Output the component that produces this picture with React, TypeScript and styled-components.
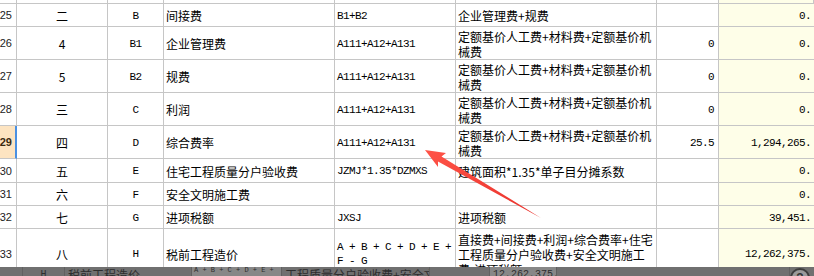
import React from 'react';
import styled, { createGlobalStyle, css } from 'styled-components';

const GlobalStyle = createGlobalStyle`
  html, body {
    margin: 0;
    padding: 0;
    background: #ffffff;
    overflow: hidden;
  }
`;

const CJK = `"Noto Sans CJK SC", "Noto Sans", sans-serif`;
const MONO = `"Liberation Mono", "Noto Sans CJK SC", monospace`;

type Line = {
  no: string;
  num: string;
  code: string;
  name: string;
  formula: string[];
  desc: string[];
  rate: string;
  amount: string;
  h: number;
  active?: boolean;
};

const lines: Line[] = [
  { no: '25', num: '二', code: 'B', name: '间接费', formula: ['B1+B2'], desc: ['企业管理费+规费'], rate: '', amount: '0.00', h: 23 },
  { no: '26', num: '4', code: 'B1', name: '企业管理费', formula: ['A111+A12+A131'], desc: ['定额基价人工费+材料费+定额基价机', '械费'], rate: '0', amount: '0.00', h: 33 },
  { no: '27', num: '5', code: 'B2', name: '规费', formula: ['A111+A12+A131'], desc: ['定额基价人工费+材料费+定额基价机', '械费'], rate: '0', amount: '0.00', h: 33 },
  { no: '28', num: '三', code: 'C', name: '利润', formula: ['A111+A12+A131'], desc: ['定额基价人工费+材料费+定额基价机', '械费'], rate: '0', amount: '0.00', h: 33 },
  { no: '29', num: '四', code: 'D', name: '综合费率', formula: ['A111+A12+A131'], desc: ['定额基价人工费+材料费+定额基价机', '械费'], rate: '25.5', amount: '1,294,265.00', h: 33, active: true },
  { no: '30', num: '五', code: 'E', name: '住宅工程质量分户验收费', formula: ['JZMJ*1.35*DZMXS'], desc: ['建筑面积*1.35*单子目分摊系数'], rate: '', amount: '0.00', h: 24 },
  { no: '31', num: '六', code: 'F', name: '安全文明施工费', formula: [''], desc: [''], rate: '', amount: '0.00', h: 23 },
  { no: '32', num: '七', code: 'G', name: '进项税额', formula: ['JXSJ'], desc: ['进项税额'], rate: '', amount: '39,451.00', h: 23 },
  { no: '33', num: '八', code: 'H', name: '税前工程造价', formula: ['A + B + C + D + E +', 'F - G'], desc: ['直接费+间接费+利润+综合费率+住宅', '工程质量分户验收费+安全文明施工', '费-进项税额'], rate: '', amount: '12,262,375.74', h: 50 },
];

export default function App() {
  return (
    <>
      <GlobalStyle />
      <Sheet>
        <Row $h={4}>
          <RowHead />
          <Cell /><Cell /><Cell /><Cell /><Cell /><Cell /><Cell $yellow />
        </Row>
        {lines.map((l) => (
          <Row key={l.no} $h={l.h}>
            <RowHead $active={l.active}>{l.no}</RowHead>
            <Cell $align="center" $font="cjk">{l.num}</Cell>
            <Cell $align="center" $font="mono">{l.code}</Cell>
            <Cell $font="cjk">{l.name}</Cell>
            <Cell $font="mono">
              <Stack $lh={14}>
                {l.formula.map((f, i) => <span key={i}>{f}</span>)}
              </Stack>
            </Cell>
            <Cell $font="cjk">
              <Stack $lh={15}>
                {l.desc.map((d, i) => <span key={i}>{d}</span>)}
              </Stack>
            </Cell>
            <Cell $align="right" $font="mono">{l.rate}</Cell>
            <AmountCell>
              <AmountClip>
                <AmountText>{l.amount}</AmountText>
              </AmountClip>
            </AmountCell>
          </Row>
        ))}

        <DragGhost>
          <Seg $w={23} />
          <Seg $w={42} $center>H</Seg>
          <Seg $w={127} $cjk>税前工程造价</Seg>
          <Seg $w={90} $light $tiny>A + B + C + D + E +</Seg>
          <Seg $w={148} $cjk>工程质量分户验收费+安全文明施工</Seg>
          <Seg $w={60} />
          <Seg $w={67} $light $right>12,262,375.74</Seg>
          <Seg $w={233} />
          <HelpBadge>?</HelpBadge>
        </DragGhost>

        <Arrow viewBox="0 0 814 276" width={814} height={276}>
          <defs>
            <linearGradient id="arrowFill" x1="0" y1="0" x2="1" y2="1">
              <stop offset="0" stopColor="#ff5448" />
              <stop offset="1" stopColor="#e8302a" />
            </linearGradient>
          </defs>
          <polygon
            points="425,150 446,153 441.5,156.5 541,218 438,161.5 438,167"
            fill="url(#arrowFill)"
          />
        </Arrow>
      </Sheet>
    </>
  );
}

const Sheet = styled.div`
  position: relative;
  width: 814px;
  height: 276px;
  overflow: hidden;
  background: #ffffff;
  color: #000000;
`;

const Row = styled.div<{ $h: number }>`
  display: grid;
  grid-template-columns: 17px 91px 56px 171px 121px 201px 62px 95px;
  height: ${(p) => p.$h}px;
`;

const RowHead = styled.div<{ $active?: boolean }>`
  box-sizing: border-box;
  display: flex;
  align-items: center;
  justify-content: flex-end;
  padding-right: 4px;
  border-right: 1px solid #c6c6c6;
  border-bottom: 1px solid #c6c6c6;
  font-family: "Liberation Sans", sans-serif;
  font-size: 11px;
  color: #222;
  overflow: hidden;
  white-space: nowrap;

  ${(p) =>
    p.$active &&
    css`
      background: #fde4c1;
      border-right: 2px solid #4a90e2;
      padding-right: 3px;
      font-weight: bold;
      color: #3a2a10;
    `}
`;

const Cell = styled.div<{
  $align?: 'left' | 'center' | 'right';
  $font?: 'cjk' | 'mono';
  $yellow?: boolean;
}>`
  box-sizing: border-box;
  display: flex;
  align-items: center;
  justify-content: ${(p) =>
    p.$align === 'center' ? 'center' : p.$align === 'right' ? 'flex-end' : 'flex-start'};
  padding: ${(p) => (p.$align === 'right' ? '1px 4px 0 2px' : '1px 2px 0 2px')};
  border-right: 1px solid #c6c6c6;
  border-bottom: 1px solid #c6c6c6;
  background: ${(p) => (p.$yellow ? '#fefee8' : '#ffffff')};
  font-family: ${(p) => (p.$font === 'mono' ? MONO : CJK)};
  font-size: ${(p) => (p.$font === 'mono' ? '11px' : '12px')};
  letter-spacing: ${(p) => (p.$font === 'mono' ? '-0.6px' : '0')};
  white-space: nowrap;
  overflow: hidden;
`;

const AmountCell = styled.div`
  box-sizing: border-box;
  display: flex;
  align-items: center;
  padding: 1px 3px 0 2px;
  border-bottom: 1px solid #c6c6c6;
  background: #fefee8;
  font-family: ${MONO};
  font-size: 11px;
  letter-spacing: -0.6px;
  white-space: nowrap;
  overflow: hidden;
`;

/* the grid window ends mid-value, so the decimals fall outside */
const AmountClip = styled.div`
  flex: 1;
  display: flex;
  justify-content: flex-end;
  overflow: hidden;
`;

const AmountText = styled.span`
  margin-right: -12px;
`;

const Stack = styled.div<{ $lh: number }>`
  display: flex;
  flex-direction: column;
  line-height: ${(p) => p.$lh}px;
`;

const DragGhost = styled.div`
  position: absolute;
  left: 0;
  top: 267px;
  width: 814px;
  height: 9px;
  display: flex;
  background: #707070;
  overflow: hidden;
`;

const Seg = styled.div<{ $w: number; $light?: boolean; $center?: boolean; $right?: boolean; $cjk?: boolean; $tiny?: boolean }>`
  box-sizing: border-box;
  flex: 0 0 ${(p) => p.$w}px;
  height: 100%;
  padding: ${(p) => (p.$tiny ? '0 2px' : '2px 3px 0')};
  border-right: 1px solid #5e5e5e;
  background: ${(p) => (p.$light ? '#8c8c8c' : 'transparent')};
  color: #222;
  font-family: ${(p) => (p.$cjk ? CJK : MONO)};
  font-size: ${(p) => (p.$tiny ? '7px' : p.$cjk ? '12px' : '10px')};
  line-height: ${(p) => (p.$tiny ? '7px' : '12px')};
  text-align: ${(p) => (p.$center ? 'center' : p.$right ? 'right' : 'left')};
  white-space: nowrap;
  overflow: hidden;
  opacity: 0.85;
`;

const HelpBadge = styled.div`
  box-sizing: border-box;
  flex: 0 0 20px;
  height: 20px;
  margin-top: 1px;
  border: 2px solid #3d3d3d;
  border-radius: 50%;
  background: #9a9a9a;
  color: #333;
  font-family: "Liberation Sans", sans-serif;
  font-weight: bold;
  font-size: 12px;
  text-align: center;
  line-height: 16px;
`;

const Arrow = styled.svg`
  position: absolute;
  left: 0;
  top: 0;
  pointer-events: none;
`;
